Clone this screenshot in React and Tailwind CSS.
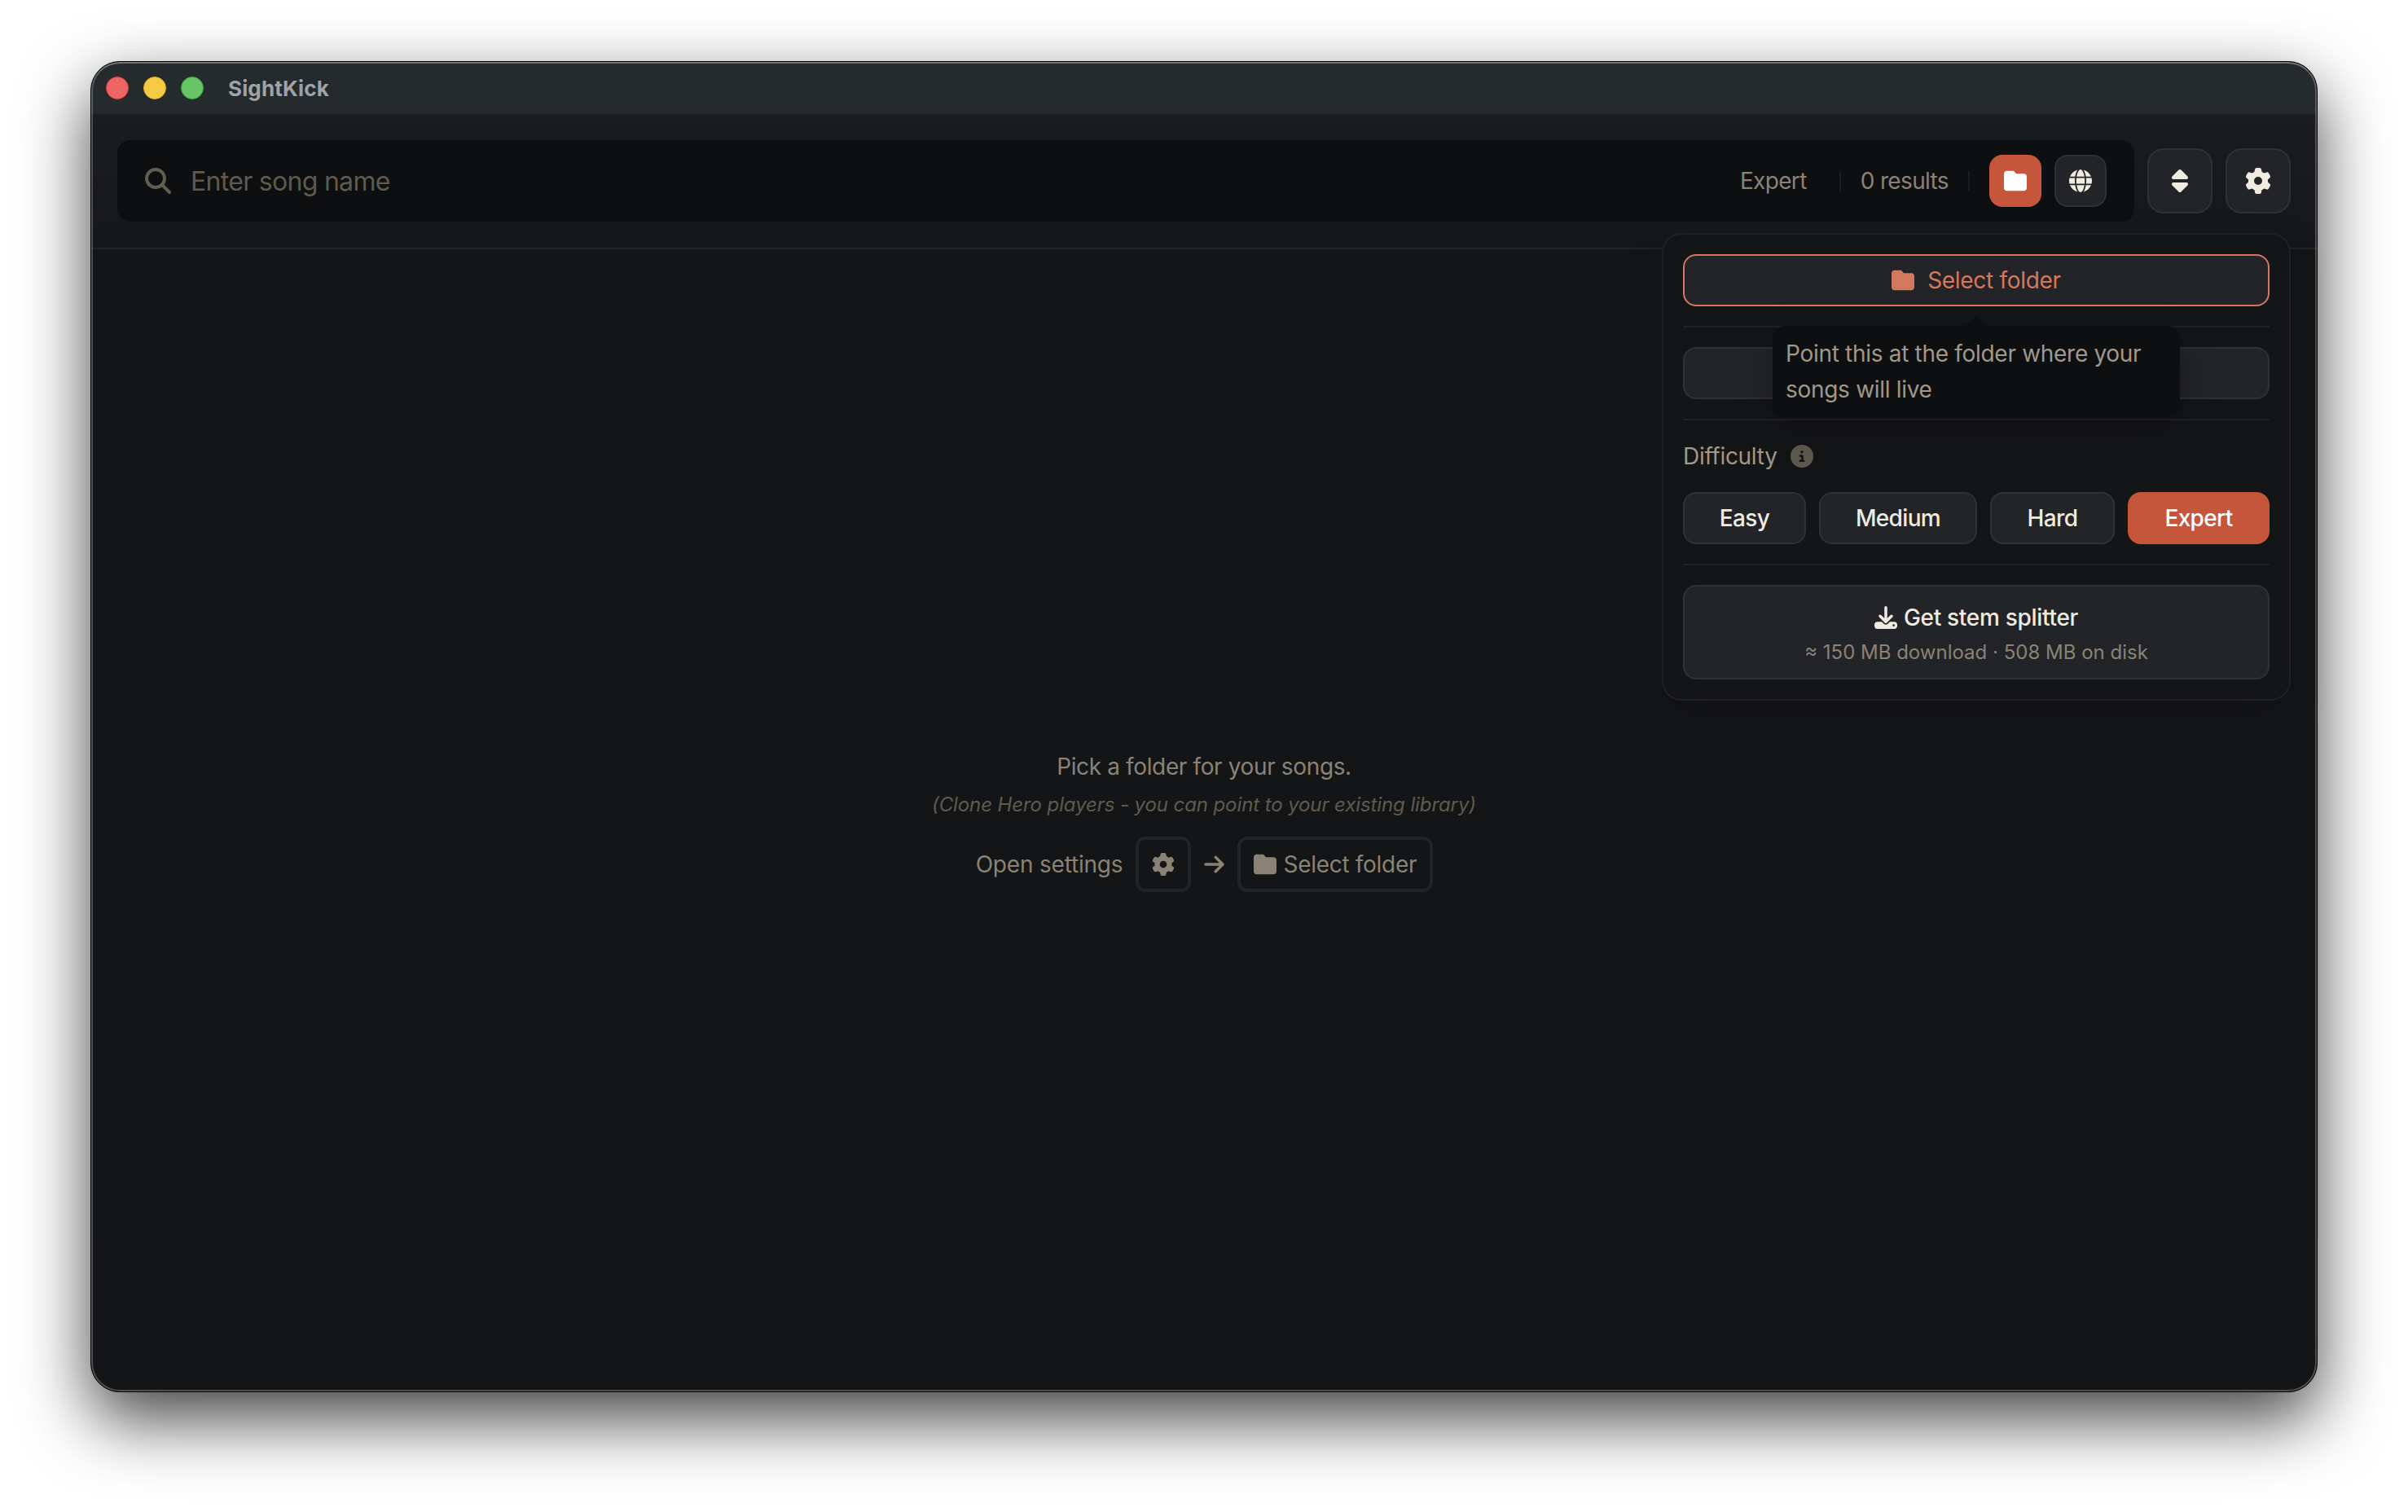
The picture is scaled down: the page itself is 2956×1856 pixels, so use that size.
import React, { useState } from 'react';
import {
  FaArrowRight,
  FaCircleInfo,
  FaDownload,
  FaFolder,
  FaGear,
  FaGlobe,
  FaMagnifyingGlass,
  FaSort,
} from 'react-icons/fa6';

const DIFFICULTIES = [
  { label: 'Easy', width: 'w-[151px]' },
  { label: 'Medium', width: 'w-[194px]' },
  { label: 'Hard', width: 'w-[153px]' },
  { label: 'Expert', width: 'w-[174px]' },
];

const surface = 'bg-[#232428] border-2 border-[#303134] text-[#f0ebe0]';

const Divider = () => <div className="h-0.5 w-full shrink-0 bg-[#202124]" />;

const TitleBar = () => (
  <div className="flex h-16 shrink-0 items-center border-b-2 border-[#262625] bg-[#252a2d] pt-0.5 pl-[18px]">
    <div className="flex gap-[18px]">
      <span className="size-7 rounded-full border border-[#e2463f] bg-[#ee6566]" />
      <span className="size-7 rounded-full border border-[#e0ac1f] bg-[#f4c943]" />
      <span className="size-7 rounded-full border border-[#35ac3c] bg-[#66c466]" />
    </div>
    <span className="ml-[30px] text-[26px] font-bold tracking-[0.15px] text-[#9ea3a8]">SightKick</span>
  </div>
);

const SearchBar = ({ difficulty }) => (
  <div className="flex h-[100px] flex-1 items-center rounded-2xl bg-[#0e0f11] pr-[34px] pl-[34px]">
    <FaMagnifyingGlass className="size-8 text-[#635d50]" />
    <input
      className="ml-6 min-w-0 flex-1 bg-transparent pt-0.5 text-[32px] tracking-[-0.7px] outline-none placeholder:text-[#605a4e]"
      placeholder="Enter song name"
    />
    <span className="text-[28px] tracking-[-0.65px] text-[#8a8375]">{difficulty}</span>
    <div className="ml-10 h-6 w-0.5 bg-[#1b1c1f]" />
    <span className="ml-6 text-[28px] tracking-[-0.65px] text-[#8a8375]">0 results</span>
    <div className="ml-6 h-6 w-0.5 bg-[#1b1c1f]" />
    <button className="ml-6 flex size-16 items-center justify-center rounded-2xl bg-[#c5553b] text-white">
      <FaFolder className="size-7" />
    </button>
    <button className={`ml-4 flex size-16 items-center justify-center rounded-2xl ${surface}`}>
      <FaGlobe className="size-7" />
    </button>
  </div>
);

const Tooltip = () => (
  <div className="absolute top-[112px] left-[134px] z-20 h-28 w-[500px] rounded-2xl bg-[#0e0f11] px-4 py-3 text-[28px] leading-[44.4px] text-[#a0988a] shadow-[0_16px_48px_rgba(0,0,0,0.25)]">
    <svg className="absolute -top-3 left-[234px] h-3 w-8" viewBox="0 0 32 12" fill="#0e0f11">
      <path d="M3 12C7 10 10 5 13.500 1.200Q16-1 18.500 1.200C22 5 25 10 29 12z" />
    </svg>
    Point this at the folder where your songs will live
  </div>
);

const SettingsMenu = ({ difficulty, onDifficulty }) => (
  <div className="absolute top-[146px] right-8 z-10 flex h-[574px] w-[772px] flex-col rounded-3xl border-2 border-[#202124] bg-[#141517] p-6 text-[28px] tracking-[-0.3px] shadow-[0_16px_48px_rgba(0,0,0,0.2)]">
    <button className="flex h-16 shrink-0 items-center justify-center gap-4 rounded-2xl border-2 border-[#d4785e] bg-[#232428] text-[#d4785e]">
      <FaFolder className="size-7" />
      <span>Select folder</span>
    </button>
    <div className="my-6">
      <Divider />
    </div>
    <button className={`h-16 shrink-0 rounded-2xl ${surface}`} />
    <div className="my-6">
      <Divider />
    </div>
    <div className="flex h-10 shrink-0 items-center gap-4 text-[#a0988a]">
      <span>Difficulty</span>
      <FaCircleInfo className="size-7 text-[#5f5a4e]" />
    </div>
    <div className="mt-6 flex justify-between">
      {DIFFICULTIES.map(({ label, width }) => (
        <button
          key={label}
          onClick={() => onDifficulty(label)}
          className={`h-16 rounded-2xl font-medium tracking-[-0.65px] ${width} ${
            label === difficulty ? 'bg-[#c5553b] text-white' : surface
          }`}
        >
          {label}
        </button>
      ))}
    </div>
    <div className="my-6">
      <Divider />
    </div>
    <button className={`flex h-[116px] shrink-0 flex-col items-center justify-center rounded-2xl pt-1 ${surface}`}>
      <span className="flex items-center gap-2 font-medium leading-[45px]">
        <FaDownload className="size-7" />
        Get stem splitter
      </span>
      <span className="text-[24px] leading-10 tracking-normal text-[#8a8375]">
        ≈ 150 MB download · 508 MB on disk
      </span>
    </button>
    <Tooltip />
  </div>
);

const EmptyState = () => (
  <div className="flex flex-1 flex-col items-center pt-[613px] text-[28px] tracking-[-0.29px] text-[#8a8375]">
    <p className="leading-[45px] tracking-[-0.37px]">Pick a folder for your songs.</p>
    <p className="mt-1 text-[24px] leading-[40px] tracking-[-0.1px] text-[#605a4e] italic">
      (Clone Hero players - you can point to your existing library)
    </p>
    <div className="mt-[19px] ml-px flex items-center gap-4">
      <span className="tracking-[-0.2px]">Open settings</span>
      <span className="flex size-[68px] items-center justify-center rounded-xl border-4 border-[#232427]">
        <FaGear className="size-7" />
      </span>
      <FaArrowRight className="h-7 w-[25px]" />
      <span className="flex h-[68px] w-60 items-center justify-center gap-2 rounded-xl border-4 border-[#232427]">
        <FaFolder className="size-7" />
        Select folder
      </span>
    </div>
  </div>
);

const App = () => {
  const [difficulty, setDifficulty] = useState('Expert');

  return (
    <div className="h-[1856px] w-[2956px] overflow-hidden bg-white px-[111px] pt-[75px] font-['Inter','Liberation_Sans',sans-serif]">
      <div className="relative flex h-[1634px] w-[2734px] flex-col rounded-[36px] border border-black bg-[#141517] shadow-[0_33px_84px_rgba(0,0,0,0.74)]">
        <div className="relative flex flex-1 flex-col overflow-hidden rounded-[35px]">
          <TitleBar />
          <div className="flex h-[166px] shrink-0 items-center gap-4 border-b-2 border-[#232427] bg-linear-to-b from-[#1b1c1f] to-[#16171a] px-8">
            <SearchBar difficulty={difficulty} />
            <button className={`flex size-20 items-center justify-center rounded-[20px] ${surface}`}>
              <FaSort className="size-8" />
            </button>
            <button className={`flex size-20 items-center justify-center rounded-[20px] ${surface}`}>
              <FaGear className="size-8" />
            </button>
          </div>
          <EmptyState />
          <div className="pointer-events-none absolute inset-0 rounded-[35px] border-2 border-white/25 border-t-white/35" />
        </div>
        <div className="absolute inset-x-0 top-16">
          <SettingsMenu difficulty={difficulty} onDifficulty={setDifficulty} />
        </div>
      </div>
    </div>
  );
};

export default App;
